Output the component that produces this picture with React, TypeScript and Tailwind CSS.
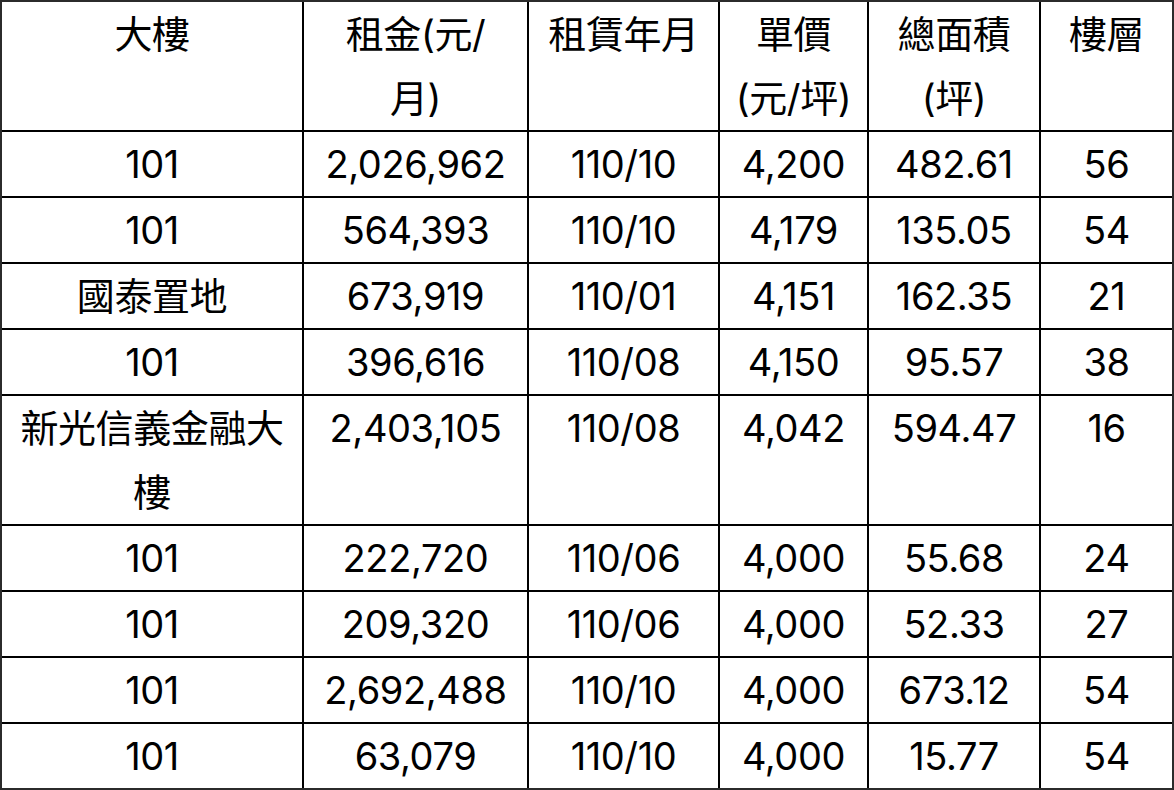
const headers = ["大樓", "租金(元/\n月)", "租賃年月", "單價(元/坪)", "總面積(坪)", "樓層"];

const rows = [
    ["101", "2,026,962", "110/10", "4,200", "482.61", "56"],
    ["101", "564,393", "110/10", "4,179", "135.05", "54"],
    ["國泰置地", "673,919", "110/01", "4,151", "162.35", "21"],
    ["101", "396,616", "110/08", "4,150", "95.57", "38"],
    ["新光信義金融大樓", "2,403,105", "110/08", "4,042", "594.47", "16"],
    ["101", "222,720", "110/06", "4,000", "55.68", "24"],
    ["101", "209,320", "110/06", "4,000", "52.33", "27"],
    ["101", "2,692,488", "110/10", "4,000", "673.12", "54"],
    ["101", "63,079", "110/10", "4,000", "15.77", "54"],
];

const Cell = ({ text, last, bottom }: { text: string; last: boolean; bottom: boolean }) => (
    <div
        className={`text-center leading-[64px] px-[6px] break-all whitespace-pre-line border-black ${last ? "" : "border-r-2"} ${bottom ? "" : "border-b-2"}`}
    >
        {text}
    </div>
);

const App = () => {
    const all = [headers, ...rows];
    return (
        <div
            className="w-[1174px] h-[790px] overflow-hidden bg-white border-2 border-[#2b2b2b] text-black text-[38px] tracking-[-0.4px]"
            style={{ fontFamily: 'Inter, "Noto Sans CJK TC", sans-serif' }}
        >
            <div className="grid grid-cols-[302px_225px_191px_149px_172px_1fr]">
                {all.map((row, r) =>
                    row.map((cell, c) => (
                        <Cell key={`${r}-${c}`} text={cell} last={c === row.length - 1} bottom={r === all.length - 1} />
                    ))
                )}
            </div>
        </div>
    );
};

export default App;
